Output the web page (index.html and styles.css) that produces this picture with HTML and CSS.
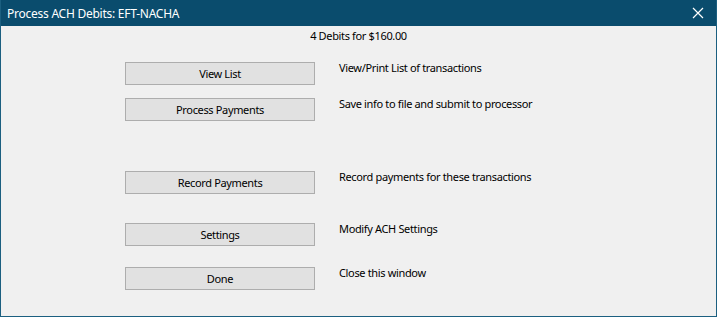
FILE: index.html
```html
<!DOCTYPE html>
<html lang="en">
<head>
    <meta charset="UTF-8">
    <title>Process ACH Debits: EFT-NACHA</title>
    <link rel="stylesheet" href="styles.css">
</head>
<body>
    <div class="window">
        <header class="titlebar">
            <span class="title">Process ACH Debits: EFT-NACHA</span>
            <button class="close" aria-label="Close">
                <svg width="12" height="12" viewBox="0 0 12 12">
                    <path d="M1 1 L11 11 M11 1 L1 11" stroke="#fff" stroke-width="1.2" fill="none"/>
                </svg>
            </button>
        </header>

        <main class="content">
            <p class="summary">4 Debits for $160.00</p>

            <div class="row row-view">
                <button class="btn">View List</button>
                <span class="desc">View/Print List of transactions</span>
            </div>
            <div class="row row-process">
                <button class="btn">Process Payments</button>
                <span class="desc">Save info to file and submit to processor</span>
            </div>
            <div class="row row-record">
                <button class="btn">Record Payments</button>
                <span class="desc">Record payments for these transactions</span>
            </div>
            <div class="row row-settings">
                <button class="btn">Settings</button>
                <span class="desc">Modify ACH Settings</span>
            </div>
            <div class="row row-done">
                <button class="btn">Done</button>
                <span class="desc">Close this window</span>
            </div>
        </main>
    </div>
</body>
</html>
```

FILE: styles.css
```css
* {
    margin: 0;
    padding: 0;
    box-sizing: border-box;
}

body {
    font-family: 'Noto Sans', 'Open Sans', sans-serif;
    font-size: 11px;
    letter-spacing: -0.35px;
    color: #000;
    background: #f0f0f0;
}

/* Window frame */
.window {
    width: 717px;
    height: 317px;
    border: 1px solid #1b5f80;
    border-top: none;
    background: #f0f0f0;
    display: flex;
    flex-direction: column;
}

.titlebar {
    height: 26px;
    background: #0a4c6d;
    display: flex;
    align-items: center;
    justify-content: space-between;
    padding-left: 6px;
}

.title {
    color: #fff;
    font-size: 12px;
    letter-spacing: -0.25px;
}

.close {
    width: 30px;
    height: 26px;
    border: none;
    background: transparent;
    display: flex;
    align-items: center;
    justify-content: center;
    margin-right: 3px;
}

/* Content */
.content {
    flex: 1;
    display: flex;
    flex-direction: column;
}

.summary {
    text-align: center;
    line-height: 16px;
    margin-top: 2px;
}

.row {
    display: flex;
    align-items: flex-start;
    padding-left: 124px;
}

.row-view { margin-top: 18px; }
.row-process { margin-top: 13px; }
.row-record { margin-top: 50px; }
.row-settings { margin-top: 29px; }
.row-done { margin-top: 21px; }

.btn {
    width: 190px;
    height: 23px;
    padding-bottom: 1px;
    background: #e1e1e1;
    border: 1px solid #adadad;
    font-family: inherit;
    font-size: 11px;
    letter-spacing: -0.35px;
    color: #000;
}

.desc {
    margin-left: 24px;
    line-height: 16px;
    margin-top: -2px;
}
```
